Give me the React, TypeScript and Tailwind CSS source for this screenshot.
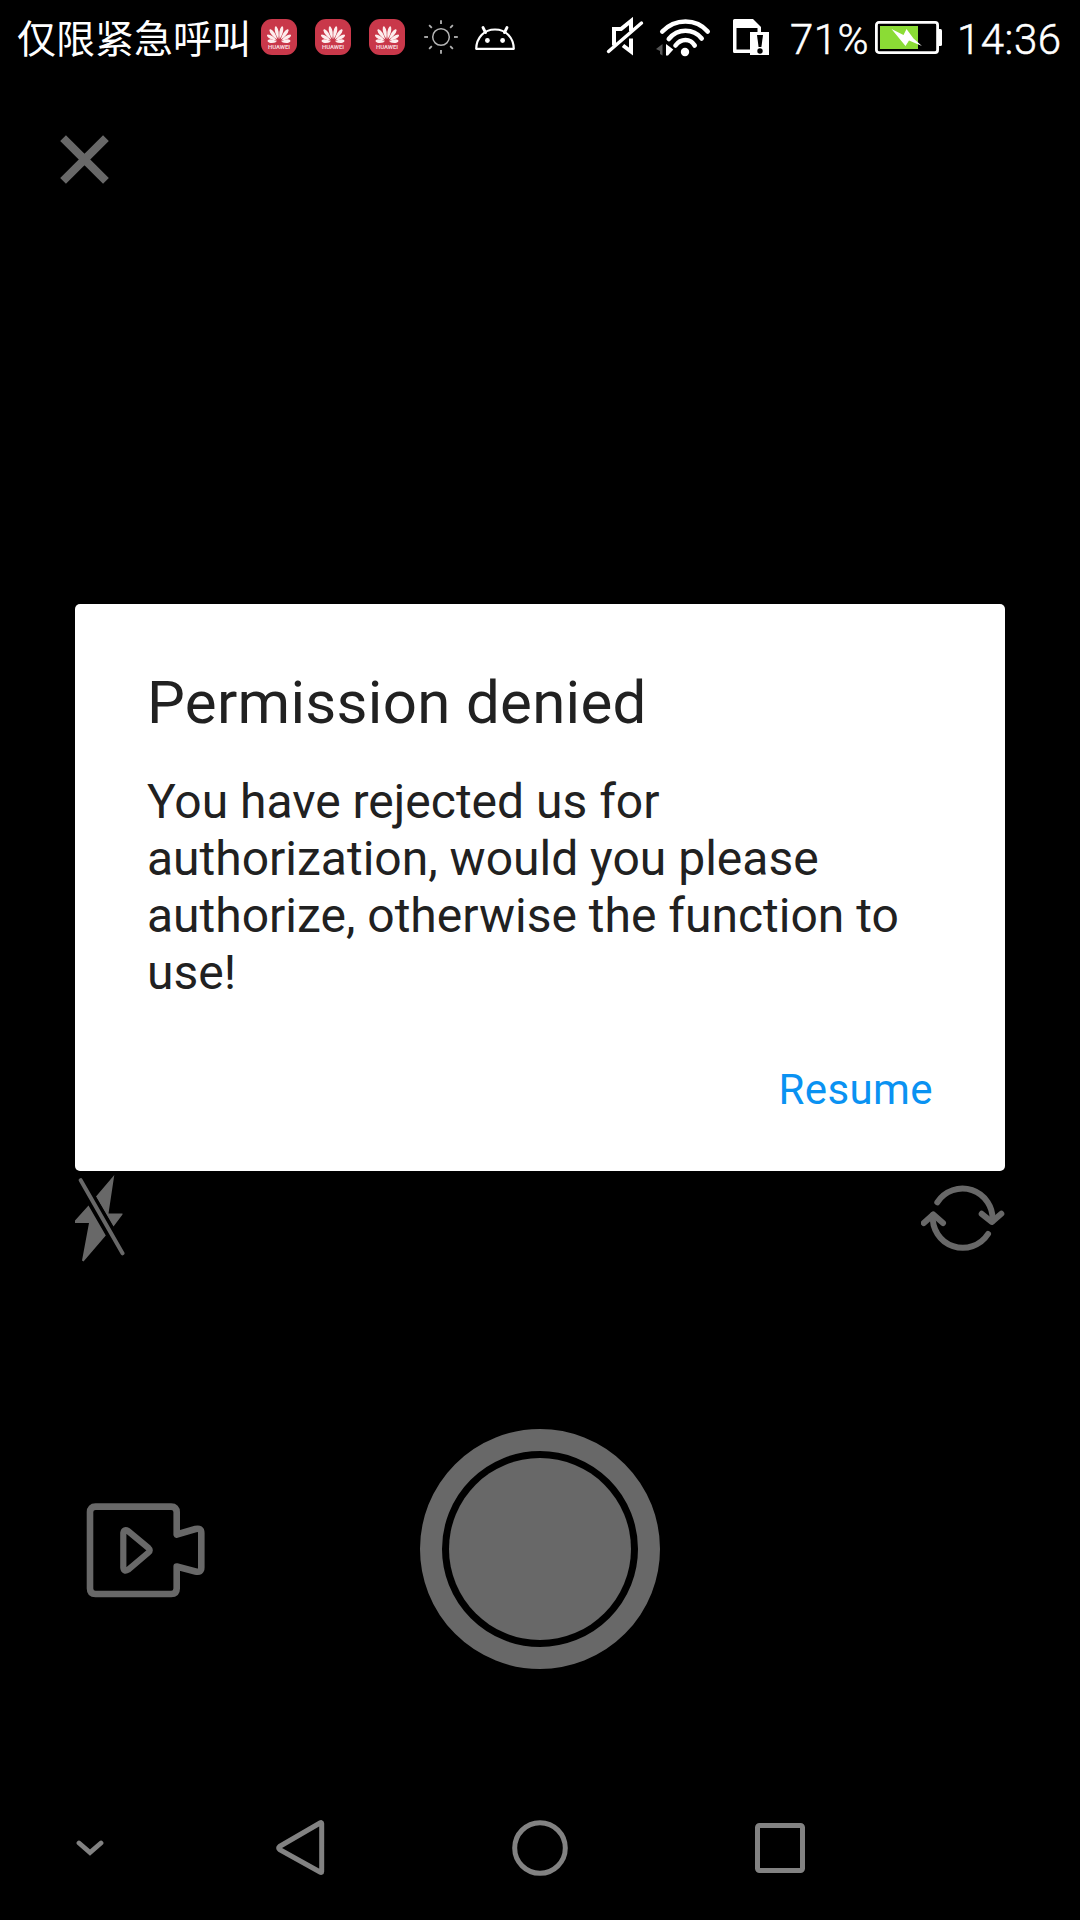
import React from 'react';

const PETALS = [
  { angle: -84, length: 0.72 },
  { angle: -60, length: 0.86 },
  { angle: -36, length: 0.98 },
  { angle: -12, length: 1 },
  { angle: 12, length: 1 },
  { angle: 36, length: 0.98 },
  { angle: 60, length: 0.86 },
  { angle: 84, length: 0.72 },
];

function HuaweiIcon() {
  return (
    <svg width="36" height="36" viewBox="0 0 36 36" className="shrink-0">
      <rect width="36" height="36" rx="11" fill="#c9384a" />
      {PETALS.map(({ angle, length }) => (
        <path
          key={angle}
          d="M0 -3C-2.6 -8 -3.2 -12.5 -1.2 -15.5Q0 -16.500 1.2 -15.5C3.2 -12.5 2.6 -8 0 -3Z"
          transform={`translate(18 23) rotate(${angle}) scale(0.74 ${length})`}
          fill="#fdeeee"
        />
      ))}
      <text x="18" y="29.5" textAnchor="middle" textLength="22" fontSize="6" fontWeight="700" fontFamily="Roboto, sans-serif" fill="#f6d5d9">
        HUAWEI
      </text>
    </svg>
  );
}

function SunIcon() {
  return (
    <svg width="36" height="36" viewBox="0 0 36 36" className="shrink-0" fill="none" stroke="#b4b4b4">
      <circle cx="18" cy="18" r="8.3" strokeWidth="1.5" />
      {[0, 45, 90, 135, 180, 225, 270, 315].map((a) => (
        <path key={a} d="M18 1.2V5" strokeWidth="1.8" transform={`rotate(${a} 18 18)`} />
      ))}
    </svg>
  );
}

function AndroidIcon() {
  return (
    <svg width="40" height="24" viewBox="0 0 40 24" className="shrink-0" fill="none" stroke="#fff" strokeWidth="2.2">
      <path d="M1.2 22.8C1.5 11.5 9 3.5 20 3.5S38.5 11.5 38.8 22.8Z" strokeLinejoin="round" />
      <path d="M10.5 6.5L8 1.5M29.5 6.5L32 1.5" strokeWidth="2.8" strokeLinecap="round" />
      <circle cx="12.4" cy="14.5" r="2.4" fill="#fff" stroke="none" />
      <circle cx="27.6" cy="14.5" r="2.4" fill="#fff" stroke="none" />
    </svg>
  );
}

function MuteIcon() {
  return (
    <svg width="38" height="40" viewBox="0 0 38 40" className="shrink-0" fill="none" stroke="#fff" strokeWidth="4">
      <path d="M8 28.5V12H15L25 4V14M25 21.5V34.5L17 28.5" />
      <path d="M2.5 34.5L35.5 6" strokeWidth="3.4" strokeLinecap="round" />
    </svg>
  );
}

function WifiIcon() {
  return (
    <svg width="55" height="40" viewBox="0 0 55 40" className="shrink-0" fill="none" stroke="#fff" strokeWidth="4.6" strokeLinecap="round">
      <path d="M0 31L6.5 26V37.5L4 36V33Z" fill="#555" stroke="none" />
      <path d="M10 26L17.3 31.5L12 37.5H10Z" fill="#fff" stroke="none" />
      <path d="M6.3 13.5Q16 3.5 29.5 3.5T51.7 13.5" />
      <path d="M12.8 21Q19.5 12.8 29.5 12.8T45.7 20.5" />
      <path d="M19.5 27.5Q23.5 22 29.5 22T38.7 27.5" />
      <circle cx="29" cy="34" r="4.2" fill="#fff" stroke="none" />
    </svg>
  );
}

function SimIcon() {
  return (
    <svg width="36" height="36" viewBox="0 0 36 36" className="shrink-0">
      <path fillRule="evenodd" d="M1.5 0H20L28 8V13H36V36H17V34H1.5Q0 34 0 32.5V1.5Q0 0 1.5 0ZM3.5 9V30.5H17V13H24.5V9Z" fill="#fff" />
      <path d="M24 16H30L28.4 28H25.6Z" fill="#000" />
      <circle cx="27" cy="32" r="2.7" fill="#000" />
    </svg>
  );
}

function BatteryIcon() {
  return (
    <svg width="67" height="33" viewBox="0 0 67 33" className="shrink-0">
      <rect x="1.4" y="1.4" width="61.2" height="30.2" rx="2.5" fill="none" stroke="#fff" strokeWidth="2.8" />
      <path d="M64 8H65.5Q67 8 67 9.5V23.5Q67 25 65.5 25H64Z" fill="#fff" />
      <rect x="5" y="5" width="38" height="23" fill="#8bdc35" />
      <path d="M16.5 8L28.5 14L31.5 8L38.5 17.5L47 25L34 19.5L30.5 25Z" fill="#fff" />
    </svg>
  );
}

function StatusBar() {
  return (
    <header className="flex h-[76px] shrink-0 items-start text-white">
      <div className="ml-[17px] mt-[8px] h-[56px] w-[244px] whitespace-nowrap font-['Noto_Sans_CJK_SC',sans-serif] text-[39px] leading-[56px]">仅限紧急呼叫</div>
      <div className="mt-[19px] flex gap-[18px]">
        <HuaweiIcon />
        <HuaweiIcon />
        <HuaweiIcon />
        <SunIcon />
      </div>
      <div className="ml-[16px] mt-[26px]"><AndroidIcon /></div>
      <div className="ml-[91px] mt-[17px]"><MuteIcon /></div>
      <div className="ml-[12px] mt-[18px]"><WifiIcon /></div>
      <div className="ml-[22px] mt-[19px]"><SimIcon /></div>
      <div className="ml-[21px] mt-[15px] w-[85px] whitespace-nowrap text-[42px] font-light leading-[50px] tracking-[0.5px] [-webkit-text-stroke:0.5px_white]">71%</div>
      <div className="mt-[21px]"><BatteryIcon /></div>
      <div className="ml-[15px] mt-[15px] whitespace-nowrap text-[42px] font-light leading-[50px] tracking-[0.5px] [-webkit-text-stroke:0.5px_white]">14:36</div>
    </header>
  );
}

function FlashOffIcon() {
  return (
    <svg width="50" height="88" viewBox="0 0 50 88" fill="#686868">
      <path d="M39.3 0L21 21.5L38.5 51.5L47.5 39.5V38.5H33.5Z" />
      <path d="M13.5 30.5L0 45.5V48H14L7 85.5L8.5 86.5L30.8 60.5Z" />
      <path d="M5.7 5.2L47.5 78.3" stroke="#000" strokeWidth="10" />
      <path d="M5.7 5.2L47.5 78.3" stroke="#686868" strokeWidth="4" strokeLinecap="round" />
    </svg>
  );
}

function SwitchCameraIcon() {
  return (
    <svg width="84" height="68" viewBox="0 0 84 68" fill="none" stroke="#686868" strokeWidth="6" strokeLinecap="round" strokeLinejoin="round">
      <path d="M16.3 17.3A30 30 0 0 1 71.4 36" />
      <path d="M60.7 28.8L70.8 37L80.3 28.8" />
      <path d="M67 49A30 30 0 0 1 11.9 30" />
      <path d="M2.8 38L12.3 29.5L22 38" />
    </svg>
  );
}

function VideoIcon() {
  return (
    <svg width="120" height="96" viewBox="0 0 120 96" fill="none" stroke="#686868" strokeWidth="6.6" strokeLinejoin="round">
      <path d="M90.7 32.5V10.1Q90.7 4.6 85.2 4.6H9.5Q4 4.6 4 10.1V86.5Q4 92 9.5 92H85.2Q90.7 92 90.7 86.5V64.5L109.5 69.5Q115.3 71 115.3 65.5V31Q115.3 25.5 109.500 27Z" />
      <path d="M37.3 31V65.500Q38 70.5 42 67.8L62.5 50.5Q65 48.3 62.5 46L42 29Q38 26.5 37.3 31Z" strokeWidth="6.2" />
    </svg>
  );
}

function NavBar() {
  return (
    <nav className="flex h-[144px] shrink-0 items-center">
      <svg className="ml-[76px]" width="28" height="18" viewBox="0 0 28 18" fill="none" stroke="#828282" strokeWidth="4.8" strokeLinecap="round">
        <path d="M3 4L14 13.5L25 4" />
      </svg>
      <svg className="ml-[172px]" width="49" height="56" viewBox="0 0 49 56" fill="none" stroke="#828282" strokeWidth="5" strokeLinejoin="round">
        <path d="M45.7 3.5V51.5Q45.7 53 44 52L3.5 29.5Q1.8 28 3.5 26.5L44 3Q45.7 2 45.7 3.5Z" />
      </svg>
      <svg className="ml-[187px]" width="56" height="56" viewBox="0 0 56 56" fill="none" stroke="#828282" strokeWidth="5">
        <circle cx="28" cy="28" r="25.3" />
      </svg>
      <svg className="ml-[187px]" width="50" height="50" viewBox="0 0 50 50" fill="none" stroke="#828282" strokeWidth="5">
        <rect x="2.5" y="2.5" width="45" height="45" rx="2" />
      </svg>
    </nav>
  );
}

export default function App() {
  return (
    <div className="relative flex h-[1920px] w-[1080px] flex-col overflow-hidden bg-black font-[Roboto,'Noto_Sans_CJK_SC',sans-serif]">
      <StatusBar />
      <main className="flex flex-1 flex-col">
        <button className="ml-[60px] mt-[59px] size-[48px]" aria-label="Close">
          <svg width="49" height="49" viewBox="0 0 48 48" stroke="#686868" strokeWidth="8">
            <path d="M3 3L45 45M45 3L3 45" />
          </svg>
        </button>
        <div className="mt-[992px] flex items-start justify-between px-[75px]">
          <FlashOffIcon />
          <div className="mt-[10px]"><SwitchCameraIcon /></div>
        </div>
        <div className="mt-[166px] flex h-[240px] items-center">
          <div className="ml-[86px] mt-[2px]"><VideoIcon /></div>
          <div className="ml-[214px] flex size-[240px] items-center justify-center rounded-full border-[22px] border-[#686868]">
            <div className="size-[182px] rounded-full bg-[#686868]" />
          </div>
        </div>
      </main>
      <NavBar />

      <section role="dialog" className="absolute left-[75px] top-[604px] flex h-[567px] w-[930px] flex-col rounded-[5px] bg-white pl-[72px] text-[#212121]">
        <h1 className="mt-[64px] whitespace-nowrap text-[60px] leading-[70px] tracking-[0.3px]">Permission denied</h1>
        <p className="mt-[35px] text-[48px] leading-[57px]">
          You have rejected us for
          <br />
          authorization, would you please
          <br />
          authorize, otherwise the function to
          <br />
          use!
        </p>
        <button className="mr-[72px] mt-[64px] self-end text-[42px] leading-[50px] tracking-[0.4px] text-[#0a92f2]">Resume</button>
      </section>
    </div>
  );
}
